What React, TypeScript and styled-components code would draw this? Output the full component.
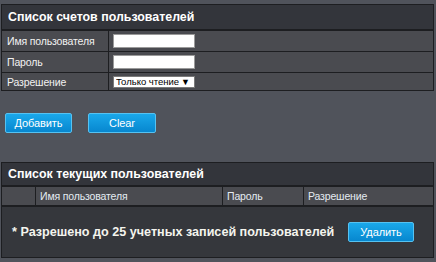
import React from "react";
import styled, { createGlobalStyle } from "styled-components";

const GlobalStyle = createGlobalStyle`
  html, body {
    margin: 0;
    padding: 0;
    background: #50535b;
  }
  body {
    font-family: "Liberation Sans", Arial, sans-serif;
  }
`;

const Page = styled.div`
  display: flex;
  flex-flow: column nowrap;
  width: 436px;
  height: 262px;
  padding: 4px 2px 0 1px;
  box-sizing: border-box;
  overflow: hidden;
`;

const Panel = styled.div`
  display: flex;
  flex-flow: column nowrap;
  border: 1px solid #1d1e21;
  background: #4a4b50;
`;

const PanelHeader = styled.div<{ $height: number }>`
  display: flex;
  align-items: center;
  height: ${(p) => p.$height}px;
  padding-left: 6px;
  background: #33353b;
  border-bottom: 2px solid #1d1e21;
  color: #ffffff;
  font-weight: bold;
  font-size: 12.4px;
`;

const FormRow = styled.div<{ $height: number }>`
  display: grid;
  grid-template-columns: 107px 1fr;
  height: ${(p) => p.$height}px;
  border-top: 1px solid #1d1e21;
  &:first-of-type {
    border-top: none;
  }
`;

const LabelCell = styled.div`
  display: flex;
  align-items: center;
  padding-left: 5px;
  border-right: 1px solid #1d1e21;
  color: #f2f2f2;
  font-size: 10.5px;
  letter-spacing: -0.15px;
`;

const ValueCell = styled.div`
  display: flex;
  align-items: center;
  padding-left: 4px;
`;

const TextInput = styled.input`
  width: 82px;
  height: 14px;
  box-sizing: border-box;
  border: 1px solid #9a9a9a;
  background: #ffffff;
  padding: 0 2px;
  font-size: 11px;
`;

const SelectBox = styled.div`
  position: relative;
  width: 82px;
  height: 12px;
`;

const Select = styled.select`
  appearance: none;
  display: block;
  width: 100%;
  height: 12px;
  box-sizing: border-box;
  border: 1px solid #7a7a7a;
  border-radius: 0;
  background: #ffffff;
  padding: 0 0 0 2px;
  margin: 0;
  font-family: "Liberation Sans", Arial, sans-serif;
  font-size: 9.5px;
  line-height: 1;
  color: #000000;
  overflow: hidden;
`;

const SelectArrow = styled.span`
  position: absolute;
  right: 5px;
  top: 0;
  bottom: 0;
  display: flex;
  align-items: center;
  font-size: 9px;
  color: #000000;
  pointer-events: none;
`;

const ButtonBar = styled.div`
  display: flex;
  gap: 16px;
  padding: 22px 0 0 4px;
  height: 71px;
  box-sizing: border-box;
`;

const BlueButton = styled.button<{ $width: number }>`
  width: ${(p) => p.$width}px;
  height: 20px;
  border: 1px solid #56c2f1;
  border-radius: 2px;
  background: linear-gradient(#1aa8ea, #0787cf);
  color: #ffffff;
  font-family: "Liberation Sans", Arial, sans-serif;
  font-size: 11px;
  letter-spacing: -0.1px;
  padding: 0;
  cursor: pointer;
`;

const ColumnRow = styled.div`
  display: grid;
  grid-template-columns: 33px 187px 81px 1fr;
  height: 18px;
  border-bottom: 2px solid #1d1e21;
`;

const ColumnCell = styled.div`
  display: flex;
  align-items: center;
  padding-left: 4px;
  border-left: 1px solid #1d1e21;
  color: #e4ebf2;
  font-size: 10.5px;
  letter-spacing: -0.15px;
  &:first-child {
    border-left: none;
  }
`;

const PanelBody = styled.div`
  display: flex;
  align-items: center;
  justify-content: space-between;
  height: 50px;
  padding: 0 19px 0 10px;
  background: #35373c;
`;

const Note = styled.span`
  color: #f4f4ee;
  font-weight: bold;
  font-size: 12.6px;
`;

const columns = ["", "Имя пользователя", "Пароль", "Разрешение"];

export default function App() {
  return (
    <>
      <GlobalStyle />
      <Page>
        <Panel>
          <PanelHeader $height={24}>Список счетов пользователей</PanelHeader>
          <div>
            <FormRow $height={20}>
              <LabelCell>Имя пользователя</LabelCell>
              <ValueCell>
                <TextInput type="text" />
              </ValueCell>
            </FormRow>
            <FormRow $height={20}>
              <LabelCell>Пароль</LabelCell>
              <ValueCell>
                <TextInput type="password" />
              </ValueCell>
            </FormRow>
            <FormRow $height={17}>
              <LabelCell>Разрешение</LabelCell>
              <ValueCell>
                <SelectBox>
                  <Select defaultValue="ro">
                    <option value="ro">Только чтение</option>
                    <option value="rw">Чтение/запись</option>
                  </Select>
                  <SelectArrow>▼</SelectArrow>
                </SelectBox>
              </ValueCell>
            </FormRow>
          </div>
        </Panel>

        <ButtonBar>
          <BlueButton $width={67}>Добавить</BlueButton>
          <BlueButton $width={68}>Clear</BlueButton>
        </ButtonBar>

        <Panel>
          <PanelHeader $height={22}>Список текущих пользователей</PanelHeader>
          <ColumnRow>
            {columns.map((c, i) => (
              <ColumnCell key={i}>{c}</ColumnCell>
            ))}
          </ColumnRow>
          <PanelBody>
            <Note>* Разрешено до 25 учетных записей пользователей</Note>
            <BlueButton $width={66}>Удалить</BlueButton>
          </PanelBody>
        </Panel>
      </Page>
    </>
  );
}
